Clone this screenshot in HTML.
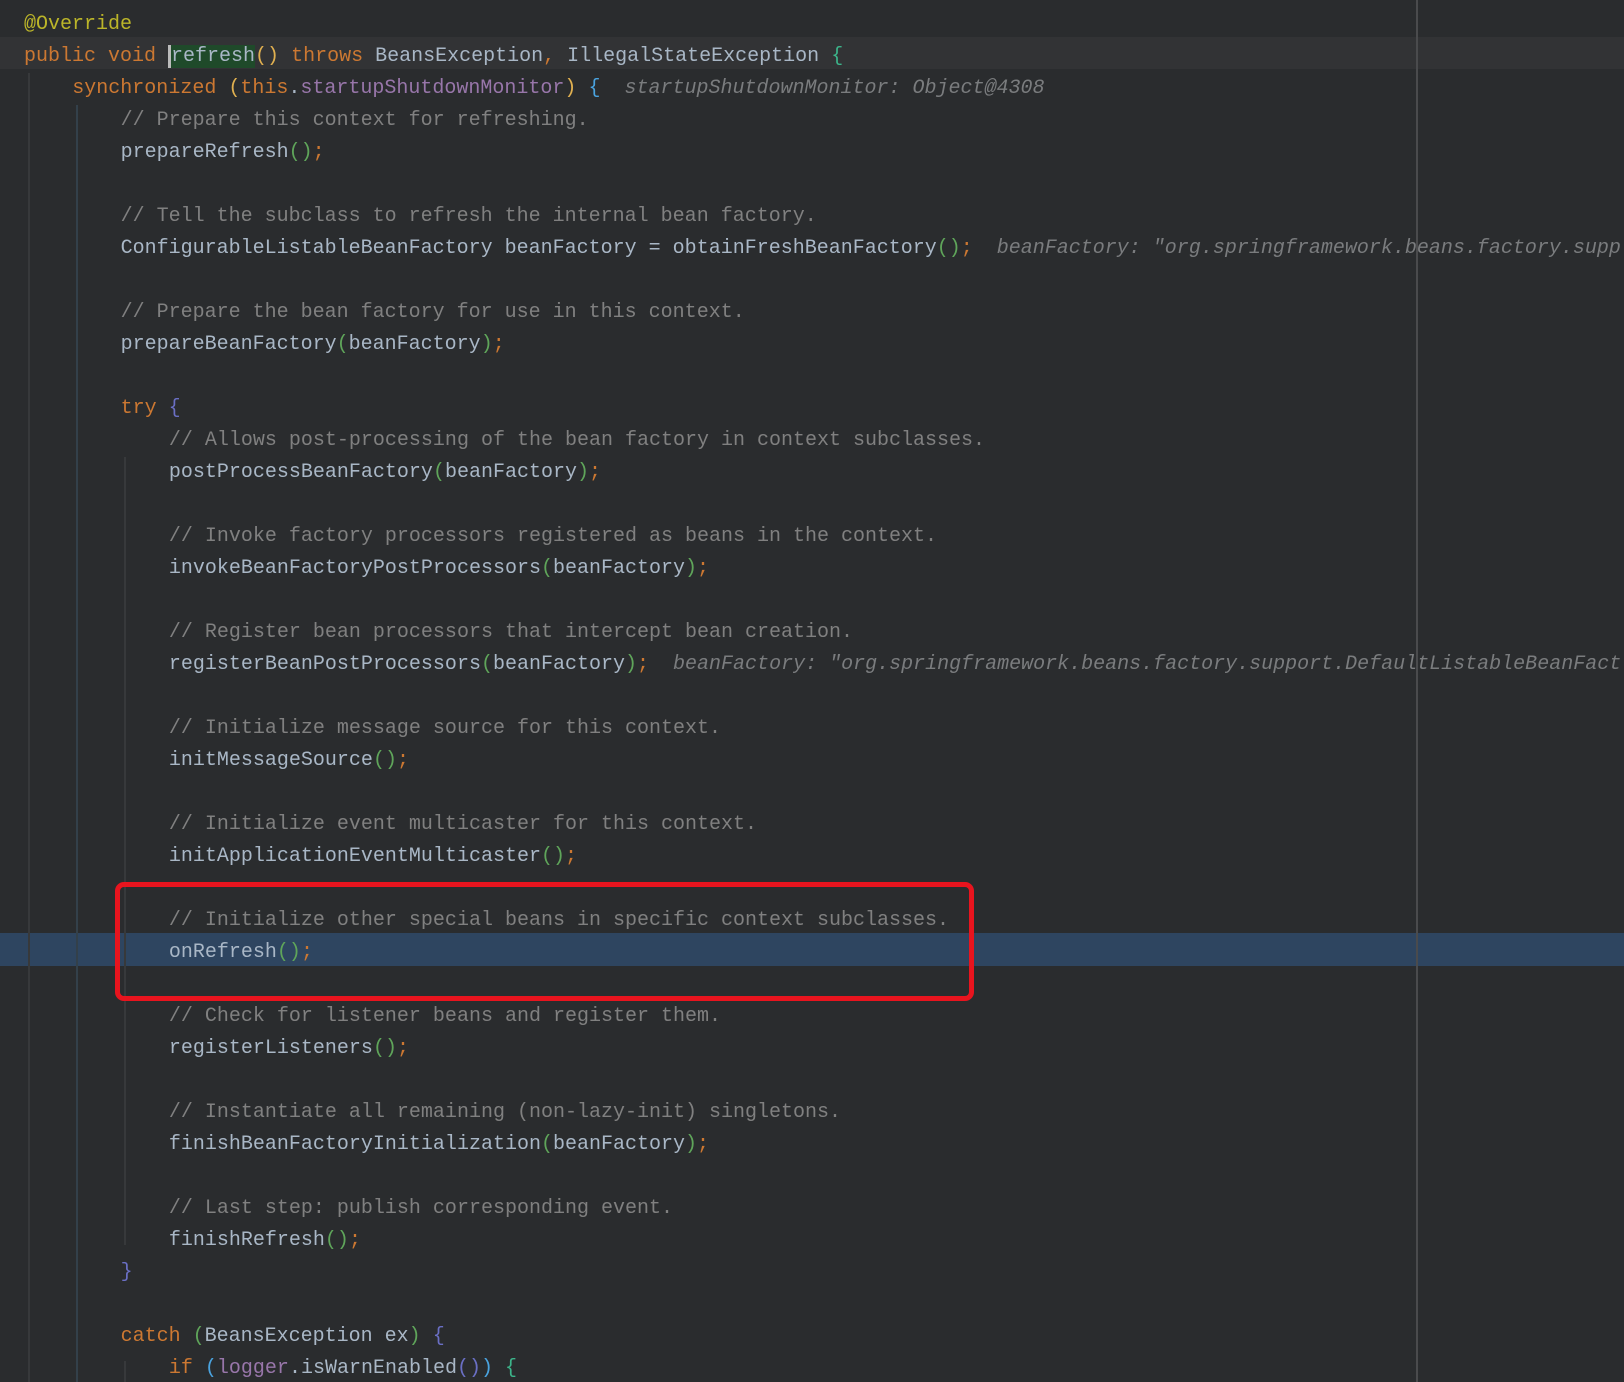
<!DOCTYPE html>
<html><head><meta charset="utf-8"><style>
html,body{margin:0;padding:0}
body{width:1624px;height:1382px;background:#2a2c2e;position:relative;overflow:hidden;font-family:"Liberation Mono",monospace;font-size:20px;}
#wrap{position:absolute;left:0;top:0;width:1624px;height:1382px;overflow:hidden}
.l{position:absolute;left:24px;height:32px;line-height:32px;white-space:pre;color:#a9b7c6;}
.k{color:#cc7832}.c{color:#808080}.a{color:#bbb529}.f{color:#9876aa}.p{color:#5fa55a}.s{color:#cc7832}
.h{color:#7a7c7e;font-style:italic}.b{color:#6a6fc4}.y{color:#e0b050}.lb{color:#4aa3df}.g{color:#3cb48a}
.g1{position:absolute;width:2px;background:#37393b}
</style></head><body><div id="wrap">
<div style="position:absolute;left:0;top:37px;width:1624px;height:32px;background:#323335"></div>
<div style="position:absolute;left:0;top:933px;width:1624px;height:33px;background:#2e4560"></div>
<div style="position:absolute;left:1416px;top:0;width:2px;height:1382px;background:#4a4b4d"></div>
<div class="g1" style="left:28px;top:73px;height:1311px"></div>
<div class="g1" style="left:76px;top:105px;height:1279px;background:#33404a"></div>
<div class="g1" style="left:124px;top:457px;height:788px"></div>
<div class="g1" style="left:124px;top:1361px;height:23px"></div>
<div id="code"></div>
<div style="position:absolute;left:115px;top:882px;width:849px;height:109px;border:5px solid #e8141e;border-radius:9px"></div>
</div>
<script>
var L=[
[0,'<span class="a">@Override</span>'],
[0,'<span class="k">public void </span><span style="background:#1f4a2a;border-left:3px solid #bbb">refresh</span><span class="y">()</span> <span class="k">throws </span>BeansException<span class="s">, </span>IllegalStateException <span class="g">{</span>'],
[1,'<span class="k">synchronized </span><span class="y">(</span><span class="k">this</span>.<span class="f">startupShutdownMonitor</span><span class="y">)</span> <span class="lb">{</span>  <span class="h">startupShutdownMonitor: Object@4308</span>'],
[2,'<span class="c">// Prepare this context for refreshing.</span>'],
[2,'prepareRefresh<span class="p">()</span><span class="s">;</span>'],
[2,''],
[2,'<span class="c">// Tell the subclass to refresh the internal bean factory.</span>'],
[2,'ConfigurableListableBeanFactory beanFactory = obtainFreshBeanFactory<span class="p">()</span><span class="s">;</span>  <span class="h">beanFactory: "org.springframework.beans.factory.supp</span>'],
[2,''],
[2,'<span class="c">// Prepare the bean factory for use in this context.</span>'],
[2,'prepareBeanFactory<span class="p">(</span>beanFactory<span class="p">)</span><span class="s">;</span>'],
[2,''],
[2,'<span class="k">try </span><span class="b">{</span>'],
[3,'<span class="c">// Allows post-processing of the bean factory in context subclasses.</span>'],
[3,'postProcessBeanFactory<span class="p">(</span>beanFactory<span class="p">)</span><span class="s">;</span>'],
[3,''],
[3,'<span class="c">// Invoke factory processors registered as beans in the context.</span>'],
[3,'invokeBeanFactoryPostProcessors<span class="p">(</span>beanFactory<span class="p">)</span><span class="s">;</span>'],
[3,''],
[3,'<span class="c">// Register bean processors that intercept bean creation.</span>'],
[3,'registerBeanPostProcessors<span class="p">(</span>beanFactory<span class="p">)</span><span class="s">;</span>  <span class="h">beanFactory: "org.springframework.beans.factory.support.DefaultListableBeanFact</span>'],
[3,''],
[3,'<span class="c">// Initialize message source for this context.</span>'],
[3,'initMessageSource<span class="p">()</span><span class="s">;</span>'],
[3,''],
[3,'<span class="c">// Initialize event multicaster for this context.</span>'],
[3,'initApplicationEventMulticaster<span class="p">()</span><span class="s">;</span>'],
[3,''],
[3,'<span class="c">// Initialize other special beans in specific context subclasses.</span>'],
[3,'onRefresh<span class="p">()</span><span class="s">;</span>'],
[3,''],
[3,'<span class="c">// Check for listener beans and register them.</span>'],
[3,'registerListeners<span class="p">()</span><span class="s">;</span>'],
[3,''],
[3,'<span class="c">// Instantiate all remaining (non-lazy-init) singletons.</span>'],
[3,'finishBeanFactoryInitialization<span class="p">(</span>beanFactory<span class="p">)</span><span class="s">;</span>'],
[3,''],
[3,'<span class="c">// Last step: publish corresponding event.</span>'],
[3,'finishRefresh<span class="p">()</span><span class="s">;</span>'],
[2,'<span class="b">}</span>'],
[2,''],
[2,'<span class="k">catch </span><span class="p">(</span>BeansException ex<span class="p">)</span> <span class="b">{</span>'],
[3,'<span class="k">if </span><span class="lb">(</span><span class="f">logger</span>.isWarnEnabled<span class="b">()</span><span class="lb">)</span> <span class="g">{</span>']
];
var h='';
for(var i=0;i<L.length;i++){h+='<div class="l" style="top:'+(9+32*i)+'px;left:'+(24+48.3*L[i][0])+'px">'+L[i][1]+'</div>';}
document.getElementById('code').innerHTML=h;
</script>
</body></html>
